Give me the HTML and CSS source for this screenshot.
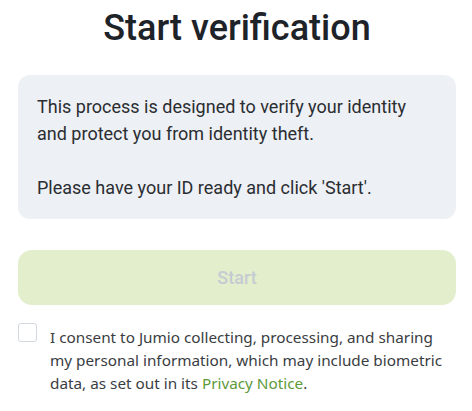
FILE: index.html
```html
<!DOCTYPE html>
<html>
<head>
<meta charset="utf-8">
<link rel="stylesheet" href="styles.css">
</head>
<body>
<main class="page">
  <h1 class="title">Start verification</h1>
  <div class="info">
    <p>This process is designed to verify your identity and protect you from identity theft.</p>
    <p>Please have your ID ready and click 'Start'.</p>
  </div>
  <button class="start" disabled>Start</button>
  <label class="consent">
    <span class="box"></span>
    <span class="consent-text">I consent to Jumio collecting, processing, and sharing my personal information, which may include biometric data, as set out in its <a href="#" class="link">Privacy Notice</a>.</span>
  </label>
</main>
</body>
</html>
```
FILE: styles.css
```css
html, body {
  margin: 0;
  padding: 0;
  background: #ffffff;
}
.page {
  padding: 0 16px 0 18px;
  font-family: Roboto, "Liberation Sans", sans-serif;
}
.title {
  margin: 0;
  padding-top: 10px;
  text-align: center;
  font-family: Roboto, "Liberation Sans", sans-serif;
  font-size: 36px;
  font-weight: 500;
  line-height: 36px;
  color: #1e2329;
}
.info {
  margin-top: 29px;
  background: #edf0f5;
  border-radius: 12px;
  padding: 18px 19px 18px 19px;
  color: #2a2d31;
  font-size: 18px;
  line-height: 27px;
}
.info p {
  margin: 0;
}
.info p + p {
  margin-top: 27px;
}
.start {
  display: block;
  width: 100%;
  height: 55px;
  margin-top: 31px;
  border: none;
  border-radius: 14px;
  background: #e3eecd;
  color: #c5cbd2;
  font-family: Roboto, "Liberation Sans", sans-serif;
  font-size: 18px;
  font-weight: 500;
}
.consent {
  display: flex;
  gap: 13px;
  margin-top: 18px;
  font-family: "Noto Sans", sans-serif;
  font-size: 15.3px;
  line-height: 23px;
  color: #3a3d42;
}
.box {
  flex: none;
  width: 17px;
  height: 17px;
  border: 1px solid #d3d7de;
  border-radius: 3px;
  background: #fff;
}
.consent-text {
  margin-top: 3px;
  max-width: 398px;
}
.link {
  color: #5c9a3a;
  text-decoration: none;
}
```
